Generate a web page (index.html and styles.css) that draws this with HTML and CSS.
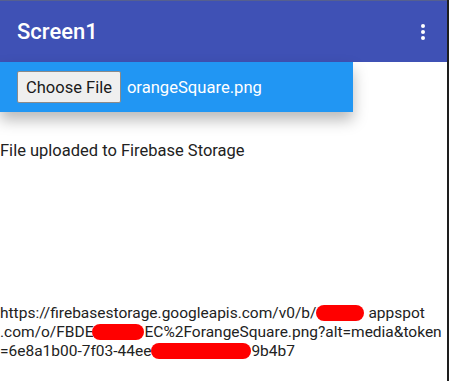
FILE: index.html
```html
<!DOCTYPE html>
<html lang="en">
<head>
    <meta charset="UTF-8">
    <meta name="viewport" content="width=device-width, initial-scale=1.0">
    <title>Screen1</title>
    <link rel="stylesheet" href="styles.css">
</head>
<body>
    <div class="screen">
        <header class="app-bar">
            <span class="title">Screen1</span>
            <span class="menu">
                <i></i><i></i><i></i>
            </span>
        </header>

        <div class="file-panel">
            <button class="choose">Choose File</button>
            <span class="file-name">orangeSquare.png</span>
        </div>

        <p class="message">File uploaded to Firebase Storage</p>

        <div class="url">
            <div>https://firebasestorage.googleapis.com/v0/b/<span class="redact r1"></span>appspot</div>
            <div>.com/o/FBDE<span class="redact r2"></span>EC%2ForangeSquare.png?alt=media&amp;token</div>
            <div>=6e8a1b00-7f03-44ee<span class="redact r3"></span>9b4b7</div>
        </div>
    </div>
</body>
</html>
```

FILE: styles.css
```css
html {
    background-color: #1e1e1e;
}

body {
    margin: 0;
    font-family: Roboto, "Noto Sans", sans-serif;
}

.screen {
    width: 447px;
    height: 381px;
    background-color: #fff;
    overflow: hidden;
}

.app-bar {
    height: 62px;
    background-color: #3f51b5;
    border-top: 1px solid #56608f;
    box-sizing: border-box;
    display: flex;
    align-items: center;
    justify-content: space-between;
    padding: 0 22px 0 17px;
}

.title {
    color: #fff;
    font-size: 22px;
    font-weight: 500;
}

.menu {
    display: flex;
    flex-direction: column;
    gap: 2px;
}

.menu i {
    width: 4px;
    height: 4px;
    border-radius: 50%;
    background-color: #fff;
}

.file-panel {
    width: 353px;
    height: 50px;
    box-sizing: border-box;
    padding-left: 17px;
    background-color: #2196f3;
    display: flex;
    align-items: center;
    gap: 6px;
    box-shadow: 0 8px 14px rgba(0, 0, 0, 0.28);
    position: relative;
}

.choose {
    height: 32px;
    padding: 0 8px;
    font-family: Roboto, sans-serif;
    font-size: 16.5px;
    color: #1a1a1a;
    background-color: #efefef;
    border: 1px solid #8a8a8a;
    border-radius: 2px;
}

.file-name {
    color: #fff;
    font-size: 16.6px;
}

.message {
    margin: 29px 0 0;
    font-size: 16.5px;
    line-height: 19px;
    color: #222;
}

.url {
    margin-top: 144px;
    font-size: 15.5px;
    line-height: 19px;
    color: #222;
    white-space: nowrap;
}

.redact {
    display: inline-block;
    height: 16px;
    border-radius: 8px;
    background-color: #ff0000;
    vertical-align: -3px;
}

.r1 {
    width: 48px;
    margin-right: 4px;
}

.r2 {
    width: 52px;
    margin-left: -1px;
}

.r3 { width: 100px; }
```
